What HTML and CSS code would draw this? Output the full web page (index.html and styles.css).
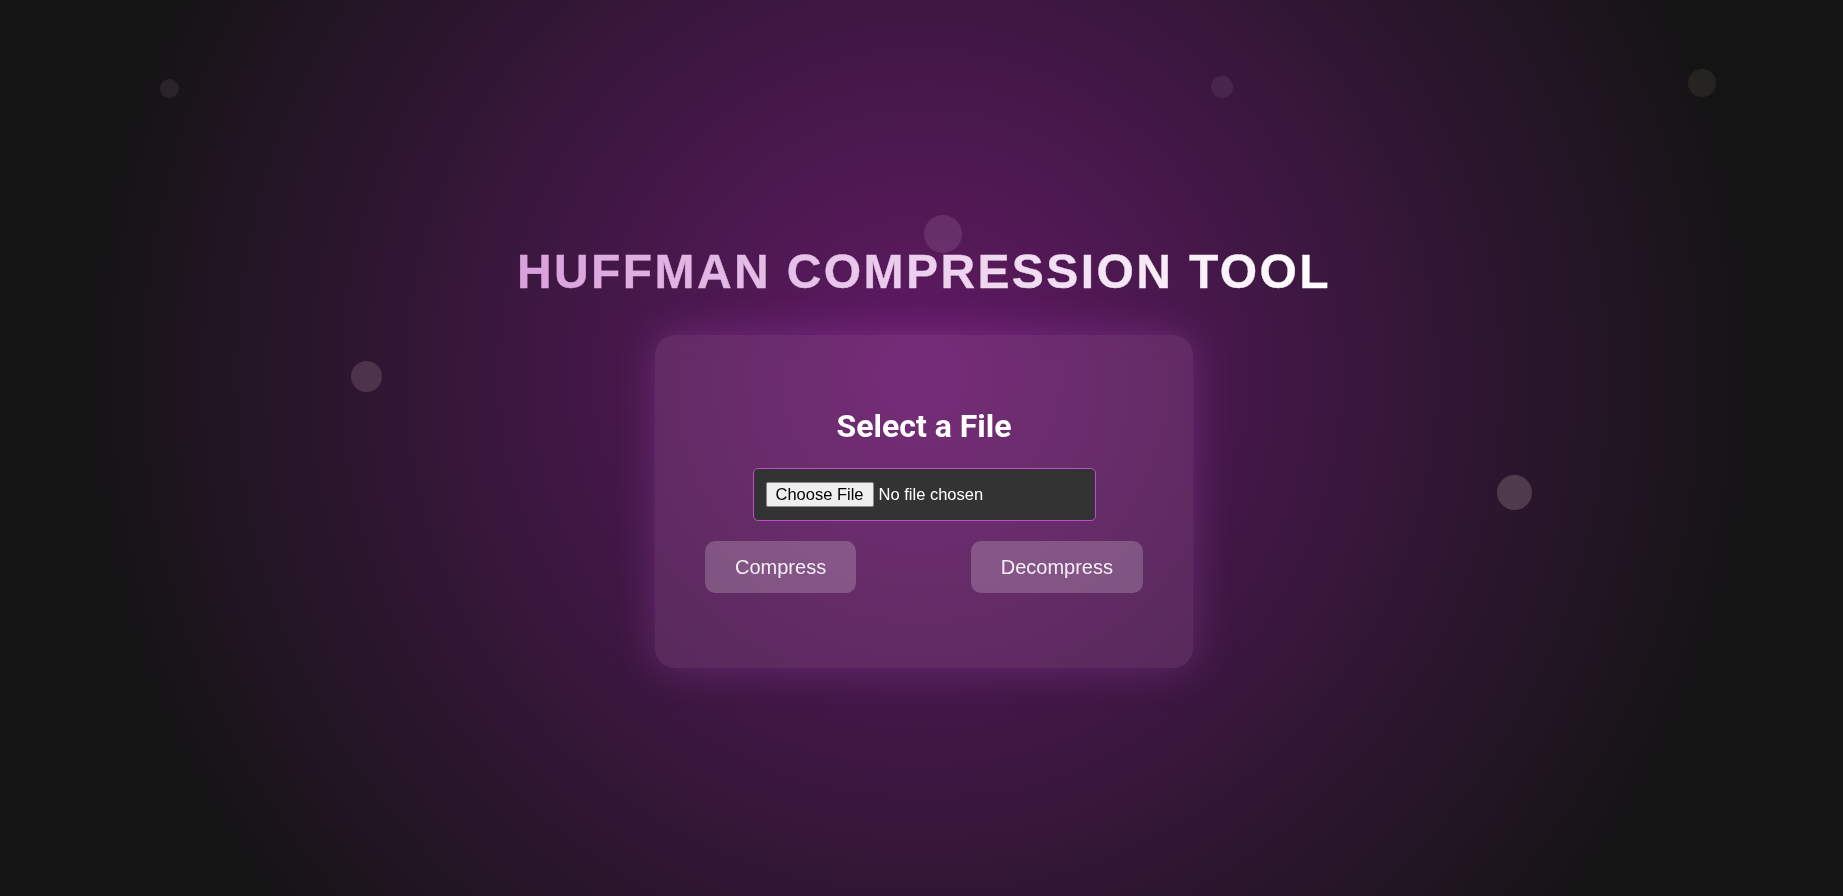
FILE: index.html
```html
<!DOCTYPE html>
<html lang="en">
<head>
<meta charset="utf-8">
<title>Huffman Compression Tool</title>
<link rel="stylesheet" href="styles.css">
</head>
<body>
  <div class="particle p1"></div>
  <div class="particle p2"></div>
  <div class="particle p3"></div>
  <div class="particle p4"></div>
  <div class="particle p5"></div>
  <div class="particle p6"></div>

  <main class="page">
    <h1 class="title">HUFFMAN COMPRESSION TOOL</h1>
    <section class="card">
      <h2 class="card-title">Select a File</h2>
      <input class="file-input" type="file">
      <div class="actions">
        <button class="btn" type="button">Compress</button>
        <button class="btn" type="button">Decompress</button>
      </div>
    </section>
  </main>
</body>
</html>
```

FILE: styles.css
```css
* {
  box-sizing: border-box;
}

html, body {
  margin: 0;
  height: 100%;
}

body {
  position: relative;
  overflow: hidden;
  font-family: "Liberation Sans", Arial, sans-serif;
  color: #fff;
  background: radial-gradient(circle at 50% 42%, #621a65 0%, #3c1740 38%, #141414 80%);
}

.page {
  display: flex;
  flex-direction: column;
  align-items: center;
  padding-top: 244px;
  padding-left: 5px;
}

.title {
  width: fit-content;
  margin: 0 0 35px;
  font-size: 48px;
  line-height: 56px;
  font-weight: 700;
  letter-spacing: 0.05em;
  background: linear-gradient(90deg, #d9a0dc 0%, #ffffff 100%);
  -webkit-background-clip: text;
  background-clip: text;
  color: transparent;
  -webkit-text-stroke: 0.4px rgba(255, 255, 255, 0.15);
}

.card {
  width: 538px;
  padding: 72px 50px 75px;
  border-radius: 20px;
  background: rgba(200, 120, 200, 0.2);
  box-shadow: 0 0 40px rgba(186, 85, 211, 0.3);
  backdrop-filter: blur(10px);
  display: flex;
  flex-direction: column;
  align-items: center;
}

.card-title {
  margin: 0 0 23px;
  font-family: Roboto, "Liberation Sans", sans-serif;
  font-size: 32px;
  line-height: 38px;
  font-weight: 700;
  color: #fff;
}

.file-input {
  display: block;
  width: 343px;
  padding: 13px 12px;
  border: 1px solid #bd4fc6;
  border-radius: 5px;
  background: #333333;
  color: #ffffff;
  font-family: "Liberation Sans", Arial, sans-serif;
  font-size: 16.5px;
  line-height: 19px;
}

.file-input::file-selector-button {
  margin-right: 5px;
  padding: 2px 9px;
  border: 1px solid #8a8a8a;
  border-radius: 2px;
  background: #efefef;
  color: #000;
  font-family: "Liberation Sans", Arial, sans-serif;
  font-size: 16.5px;
  line-height: 19px;
}

.actions {
  align-self: stretch;
  display: flex;
  justify-content: space-between;
  margin-top: 20px;
}

.btn {
  padding: 15px 30px;
  border: none;
  border-radius: 10px;
  background: rgba(255, 255, 255, 0.2);
  color: #f6eef6;
  font-family: "Liberation Sans", Arial, sans-serif;
  font-size: 20px;
  line-height: 22px;
  cursor: pointer;
}

.particle {
  position: absolute;
  border-radius: 50%;
}

.p1 { left: 160px; top: 79px; width: 19px; height: 19px; background: rgba(255, 230, 230, 0.08); }
.p2 { left: 1211px; top: 76px; width: 22px; height: 22px; background: rgba(255, 255, 255, 0.07); }
.p3 { left: 1688px; top: 69px; width: 28px; height: 28px; background: rgba(255, 255, 210, 0.07); }
.p4 { left: 924px; top: 215px; width: 38px; height: 38px; background: rgba(255, 255, 255, 0.1); }
.p5 { left: 351px; top: 361px; width: 31px; height: 31px; background: rgba(255, 220, 225, 0.15); }
.p6 { left: 1497px; top: 475px; width: 35px; height: 35px; background: rgba(255, 220, 230, 0.18); }
```
